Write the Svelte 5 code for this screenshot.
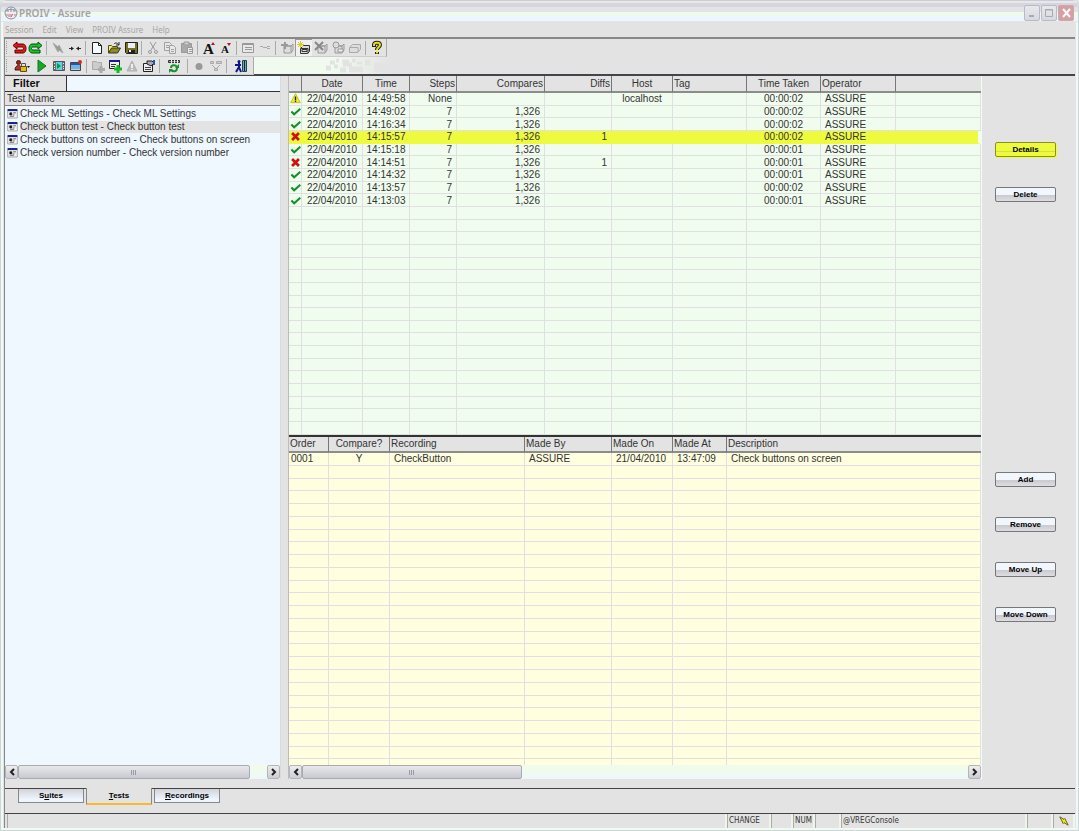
<script>
	const menus = ['Session', 'Edit', 'View', 'PROIV Assure', 'Help']

	// every icon is drawn on a 16 x 16 grid
	const disk = '<path d="M5 6h7l2-2v6l-2 3H5z" fill="#ddd" stroke="#999"/><path d="M5 6h7v6" fill="none" stroke="#999"/>'
	const icons = {
		undo: '<path d="M6 2L2 5.500 6 9V7h5c2 0 2 3 0 3H4v3h8c4 0 4-9 0-9H6z" fill="#e01818" stroke="#600"/>',
		redo: '<path d="M10 2l4 3.500L10 9V7H5c-2 0-2 3 0 3h7v3H4c-4 0-4-9 0-9h6z" fill="#18c828" stroke="#064d0c"/>',
		bolt: '<path d="M3 3l5 4 1-2 4 8-4-3-1 2z" fill="#999" stroke="#a8a8a8"/>',
		connect: '<path d="M2 8.500h4M10 8.500h4" stroke="#333"/><path d="M4 6.500l3 2-3 2zM12 6.500l-3 2 3 2z" fill="#222"/>',
		page: '<path d="M3.500 2.500h6l3 3v8h-9z" fill="#f5faff" stroke="#222"/><path d="M9.500 2.500v3h3" fill="none" stroke="#222"/>',
		open: '<path d="M2.500 13V5.500h3l1 1h5V8" fill="#f4ef80" stroke="#554f10"/><path d="M2.500 13l3-5h9l-3 5z" fill="#918b18" stroke="#333"/><path d="M8 4c2-2 3-1 5 1V2M13 5h-3" fill="none" stroke="#222"/>',
		save: '<path d="M2.500 2.500h12v11h-11l-1-1z" fill="#77751b" stroke="#222"/><path d="M5 3h7v5H5z" fill="#eef"/><path d="M5 10h7v3H5z" fill="#222"/><path d="M6 10h2v2H6z" fill="#eee"/>',
		cut: '<path d="M5 2l5 8M11 2L6 10" fill="none" stroke="#999"/><circle cx="5" cy="12" r="1.500" fill="none" stroke="#999"/><circle cx="11" cy="12" r="1.500" fill="none" stroke="#999"/>',
		copy: '<path d="M2.500 2.500h5l2 2v6h-7z" fill="#e8e8e8" stroke="#a0a0a0"/><path d="M7.500 5.500h4l2 2v6h-6z" fill="#e8e8e8" stroke="#a0a0a0"/><path d="M4 5.500h3M4 7.500h3M9 9.500h3M9 11.500h3" stroke="#a0a0a0"/>',
		paste: '<path d="M2.500 3.500h10v9h-10z" fill="#aaa" stroke="#999"/><path d="M5 2h5v3H5z" fill="#ccc" stroke="#999"/><path d="M8.500 7.500h5v6h-5z" fill="#eee" stroke="#999"/><path d="M10 9.500h3M10 11.500h3" stroke="#999"/>',
		bigger: '<text x="2" y="14" font-family="Liberation Serif" font-size="15" font-weight="700" fill="#111">A</text><path d="M10 5l2-3 2 3z" fill="#b01818"/>',
		smaller: '<text x="3" y="13" font-family="Liberation Serif" font-size="11" font-weight="700" fill="#111">A</text><path d="M9 3l2 3 2-3z" fill="#b01818"/>',
		form: '<path d="M2.500 3.500h11v9h-11z" fill="#e8e8e8" stroke="#999"/><path d="M3 4.500h11M5 7.500h7M5 9.500h7" stroke="#999"/>',
		dots: '<path d="M3 6.500h3M6 7.500h3M10 6.500h3M10 8.500h3M9 7.500h1" stroke="#aaa"/>',
		stackAdd: `${disk}<path d="M6 2v7M2 5h7" stroke="#999" stroke-width="2"/>`,
		stackNew: '<path d="M4.500 8.500l3-3h6v6l-2 2h-7z" fill="#ddd" stroke="#333"/><path d="M6 9.500h5v2H6zM5 8.500h7v5" fill="none" stroke="#333"/><path d="M4.500 1v7M1 4.500h7M2 2l5 5M7 2L2 7" stroke="#d9cf22"/>',
		stackDel: `${disk}<path d="M2 2l8 8M10 2L2 10" stroke="#888" stroke-width="2"/>`,
		stackOpen: `${disk}<circle cx="6" cy="5" r="3" fill="#ddd" stroke="#999"/><path d="M8 9h5v3H8z" fill="#eee" stroke="#999"/>`,
		stack: '<path d="M2.500 7.500l3-3h8v5l-3 3h-8z" fill="#ddd" stroke="#aaa"/><path d="M3 7.500h8v5" fill="none" stroke="#aaa"/>',
		help: '<path d="M5 7V5c0-3 6-3 6 0 0 2-3 2-3 5M8 12v2" fill="none" stroke="#222" stroke-width="4"/><path d="M5 6V5c0-3 6-3 6 0 0 2-3 2-3 5M8 11.500v2" fill="none" stroke="#e6dc18" stroke-width="2"/>',
		lock: '<circle cx="4.500" cy="4.500" r="2" fill="#922" stroke="#511"/><path d="M1 12c0-6 7-6 7 0z" fill="#a33" stroke="#511"/><path d="M7.500 8V5.500h4V8" fill="none" stroke="#555"/><path d="M6.500 8.500h6v5h-6z" fill="#e8b820" stroke="#654b08"/><path d="M13 8h3l-1.500 2z" fill="#111"/>',
		play: '<path d="M4 2l8 6-8 6z" fill="#18a828" stroke="#0b7818"/>',
		film: '<path d="M2.500 3.500h11v9h-11z" fill="#687078" stroke="#555"/><path d="M5 4h6v8H5z" fill="#65cdec"/><path d="M6 5l4 3-4 3z" fill="#159a28"/><path d="M3 5.500h1M3 8.500h1M3 10.500h1M12 5.500h1M12 8.500h1M12 10.500h1" stroke="#eee"/>',
		record: '<path d="M2.500 4.500h10v8h-10z" fill="#6bb6e8" stroke="#444"/><path d="M3 6h9" stroke="#2454b0" stroke-width="2"/><circle cx="12" cy="4" r="2" fill="#d32b20"/><path d="M3 11.500h9" stroke="#ccc"/>',
		folderAdd: '<path d="M2.500 3.500h4l1 1h4v7h-9z" fill="#ccc" stroke="#aaa"/><path d="M11 8v7M8 11.500h7" stroke="#aaa" stroke-width="3"/>',
		testAdd: '<path d="M2.500 2.500h10v8h-10z" fill="#eee" stroke="#222"/><path d="M2 3h11" stroke="#191990" stroke-width="2"/><path d="M4 6.500h5M4 8.500h4" stroke="#333"/><path d="M11 7v8M7 11h8" stroke="#18b828" stroke-width="3"/>',
		warn: '<path d="M8 3l5 10H3z" fill="#bbb" stroke="#b0b0b0"/><path d="M8 6v4M8 11v1" stroke="#eee" stroke-width="2"/>',
		props: '<path d="M2.500 5.500h9v8h-9z" fill="#eee" stroke="#222"/><path d="M4 9.500h6M4 11.500h6" stroke="#444"/><path d="M6 3h5l2 2-3 3-4-2z" fill="#aaa" stroke="#222"/><path d="M12 2h2v5h-2z" fill="#2454b0"/>',
		flow: '<path d="M2.500 2.500h11v2h-11z" fill="#999" stroke="#333"/><path d="M5.500 2v3M8.500 2v3M11.500 2v3" stroke="#eee"/><path d="M5 10c0-3 4-4 6-1M11 10c0 4-4 4-6 2" fill="none" stroke="#18942a" stroke-width="2"/><path d="M13 6v4H9zM3 15v-4h4z" fill="#18942a"/>',
		dot: '<circle cx="8" cy="8.500" r="3.500" fill="#999"/>',
		tree: '<path d="M2.500 3.500h3v2h-3zM8.500 3.500h5v2h-5zM6.500 10.500h3v2h-3z" fill="#ccc" stroke="#aaa"/><path d="M4 7l3 3M12 7l-3 3" stroke="#aaa"/>',
		exit: '<path d="M9.500 2.500h4v11h-4z" fill="#5fb3b8" stroke="#245"/><path d="M11.500 3v10" stroke="#222"/><circle cx="6" cy="3.500" r="1.500" fill="#118"/><path d="M6 4v5l-3 5M6 9l2 5M2 7h6" fill="none" stroke="#118" stroke-width="2"/>',
		// status column
		alert: '<path d="M8 1l7 13H1z" fill="#f5ee20" stroke="#b5a90a"/><path d="M8 5v5M8 11v2" stroke="#222" stroke-width="2"/>',
		ok: '<path d="M2 8l4 4 9-8" fill="none" stroke="#129028" stroke-width="3"/>',
		fail: '<path d="M3 3l10 10M13 3L3 13" stroke="#d01010" stroke-width="4"/>',
		test: '<path d="M1 2.500h14v12H1z" fill="#f2f2f2" stroke="#888"/><path d="M1 3h14" stroke="#1a2090" stroke-width="3"/><path d="M4 7h3v3H4zM9 7h4M9 10h2M4 12h6" fill="#111" stroke="#222"/>'
	}

	const mainBar = [
		'undo', 'redo', '|', 'bolt', 'connect', '|', 'page', 'open', 'save', '|', 'cut', 'copy', 'paste', '|',
		'bigger', 'smaller', '|', 'form', 'dots', '|', 'stackAdd', 'stackNew', 'stackDel', 'stackOpen', 'stack', '|', 'help'
	]
	const testBar = [
		'lock', 'play', 'film', 'record', '|', 'folderAdd', 'testAdd', 'warn', 'props', '|', 'flow', '|', 'dot', 'tree', '|', 'exit'
	]
	const wide = ['lock', 'flow', 'exit']

	const tests = [
		'Check ML Settings - Check ML Settings',
		'Check button test - Check button test',
		'Check buttons on screen - Check buttons on screen',
		'Check version number - Check version number'
	]

	// last column of each grid takes what is left
	const runColumns = [
		{ name: '', width: 13 },
		{ name: 'Date', width: 61, align: 'center' },
		{ name: 'Time', width: 47, align: 'center' },
		{ name: 'Steps', width: 47, align: 'right' },
		{ name: 'Compares', width: 88, align: 'right' },
		{ name: 'Diffs', width: 67, align: 'right' },
		{ name: 'Host', width: 61, align: 'center' },
		{ name: 'Tag', width: 74 },
		{ name: 'Time Taken', width: 74, align: 'center' },
		{ name: 'Operator', width: 75 },
		{ name: '' }
	]
	const runs = [
		['alert', '22/04/2010', '14:49:58', 'None', '', '', 'localhost', '', '00:00:02', 'ASSURE', ''],
		['ok', '22/04/2010', '14:49:02', '7', '1,326', '', '', '', '00:00:02', 'ASSURE', ''],
		['ok', '22/04/2010', '14:16:34', '7', '1,326', '', '', '', '00:00:02', 'ASSURE', ''],
		['fail', '22/04/2010', '14:15:57', '7', '1,326', '1', '', '', '00:00:02', 'ASSURE', ''],
		['ok', '22/04/2010', '14:15:18', '7', '1,326', '', '', '', '00:00:01', 'ASSURE', ''],
		['fail', '22/04/2010', '14:14:51', '7', '1,326', '1', '', '', '00:00:01', 'ASSURE', ''],
		['ok', '22/04/2010', '14:14:32', '7', '1,326', '', '', '', '00:00:01', 'ASSURE', ''],
		['ok', '22/04/2010', '14:13:57', '7', '1,326', '', '', '', '00:00:02', 'ASSURE', ''],
		['ok', '22/04/2010', '14:13:03', '7', '1,326', '', '', '', '00:00:01', 'ASSURE', '']
	]
	const stepColumns = [
		{ name: 'Order', width: 40 },
		{ name: 'Compare?', width: 61, align: 'center' },
		{ name: 'Recording', width: 135 },
		{ name: 'Made By', width: 87 },
		{ name: 'Made On', width: 61 },
		{ name: 'Made At', width: 54 },
		{ name: 'Description' }
	]
	const steps = [['0001', 'Y', 'CheckButton', 'ASSURE', '21/04/2010', '13:47:09', 'Check buttons on screen']]

	const pad = (rows, count, columns) => [
		...rows,
		...Array.from({ length: count - rows.length }, () => columns.map(() => ''))
	]

	let selectedTest = $state(1)
	let selectedRun = $state(3)
	let tab = $state('Tests')
	const tabs = [
		{ name: 'Suites', key: 1 },
		{ name: 'Tests', key: 0 },
		{ name: 'Recordings', key: 0 }
	]
</script>

{#snippet icon(name)}
	<svg class="icon" viewBox="0 0 16 16" aria-hidden="true">{@html icons[name]}</svg>
{/snippet}

{#snippet toolbar(items, label)}
	<div class="toolbar" role="toolbar" aria-label={label}>
		<span class="grip"></span>
		{#each items as item}
			{#if item === '|'}
				<span class="sep"></span>
			{:else}
				<button class="tool" class:wide={wide.includes(item)} class:pressed={item === 'stackNew'} aria-label={item}>
					{@render icon(item)}
				</button>
			{/if}
		{/each}
	</div>
{/snippet}

{#snippet scrollbar(kind)}
	<div class="scrollbar {kind}">
		<button class="arrow" aria-label="Scroll left"><svg viewBox="0 0 8 8"><path d="M6 1L3 4l3 3" /></svg></button>
		<div class="track"><div class="thumb"><i></i><i></i><i></i></div></div>
		<button class="arrow" aria-label="Scroll right"><svg viewBox="0 0 8 8"><path d="M2 1l3 3-3 3" /></svg></button>
	</div>
{/snippet}

{#snippet grid(columns, rows, kind)}
	<table class={kind}>
		<colgroup>
			{#each columns as { width }}
				<col style:width={width ? `${width}px` : 'auto'} />
			{/each}
		</colgroup>
		<thead>
			<tr>
				{#each columns as { name, align }}
					<th class={align}>{name}</th>
				{/each}
			</tr>
		</thead>
		<tbody>
			{#each rows as row, r}
				<tr
					class:selected={kind === 'runs' && r === selectedRun}
					onclick={() => { if (kind === 'runs' && row[0]) selectedRun = r }}
				>
					{#each row as cell, c}
						<td class={columns[c].align}>
							{#if icons[cell]}{@render icon(cell)}{:else}{cell}{/if}
						</td>
					{/each}
				</tr>
			{/each}
		</tbody>
	</table>
{/snippet}

<div class="window">
	<header class="titlebar">
		<svg class="logo" viewBox="0 0 14 14" aria-hidden="true">
			<circle cx="7" cy="7" r="6" fill="#ececf2" stroke="#8e8e9c" />
			<path d="M2 5c3-2 7-2 10 0M4 3v3M7 2v4M10 3v3" fill="none" stroke="#8e8e9c" />
			<path d="M5 8v3M7 8v3l2-3" fill="none" stroke="#d86a6a" />
			<path d="M3 8v2M11 8v2" stroke="#8e8e9c" />
		</svg>
		<h1>PROIV - Assure</h1>
		<button class="caption" aria-label="Minimise"><svg viewBox="0 0 14 14"><path d="M4 10h5" stroke-width="2" /></svg></button>
		<button class="caption" aria-label="Maximise"><svg viewBox="0 0 14 14"><path d="M3.500 3.500h7v7h-7z" /><path d="M3 4h8" /></svg></button>
		<button class="caption close" aria-label="Close"><svg viewBox="0 0 14 14"><path d="M4 3l7 8M11 3l-7 8" stroke-width="2" /></svg></button>
	</header>

	<nav class="menu">
		{#each menus as menu}
			<button>{menu}</button>
		{/each}
	</nav>

	<div class="client">
		<div class="bars">
			{@render toolbar(mainBar, 'Main')}
			<div class="bar_row">
				{@render toolbar(testBar, 'Tests')}
				<svg class="specks" viewBox="0 0 137 16" aria-hidden="true">
					<path d="M76 3h5v4h-5zM82 1h3v4h-3zM88 2h7v3h3v4h-9zM98 1h4v4h-4zM72 8h5v5h-5zM80 7h4v4h-4zM86 10h6v5h-6zM95 9h14v6H95zM103 4h5v3h-5zM111 2h5v6h-5zM120 5h17v10h-17z" />
				</svg>
			</div>
		</div>

		<main>
			<section class="side">
				<div class="filter">
					<label for="filter">Filter</label>
					<input id="filter" type="text" />
				</div>
				<div class="list_head">Test Name</div>
				<ul>
					{#each tests as test, i}
						<li>
							<button class:current={i === selectedTest} onclick={() => (selectedTest = i)}>
								{@render icon('test')}<span>{test}</span>
							</button>
						</li>
					{/each}
				</ul>
				{@render scrollbar('left')}
			</section>

			<section class="grids">
				{@render grid(runColumns, pad(runs, 27, runColumns), 'runs')}
				{@render grid(stepColumns, pad(steps, 25, stepColumns), 'steps')}
				{@render scrollbar('right')}
			</section>

			<aside>
				<div class="actions">
					<button class="action hot">Details</button>
					<button class="action">Delete</button>
				</div>
				<div class="actions">
					<button class="action">Add</button>
					<button class="action">Remove</button>
					<button class="action">Move Up</button>
					<button class="action">Move Down</button>
				</div>
			</aside>
		</main>

		<div class="tabs">
			{#each tabs as { name, key }}
				<button class:active={name === tab} onclick={() => (tab = name)}>
					{name.slice(0, key)}<u>{name[key]}</u>{name.slice(key + 1)}
				</button>
			{/each}
		</div>

		<footer>
			<span class="fill"></span>
			<span class="change">CHANGE</span>
			<span class="small"></span>
			<span class="small">NUM</span>
			<span class="medium"></span>
			<span class="host">@VREGConsole</span>
			<span class="medium"></span>
			<span class="small">
				<svg class="spark" viewBox="0 0 12 12" aria-hidden="true">
					<path d="M1 1l5 3 1-1 4 8-5-3-1 1z" fill="#f0e818" stroke="#4f4a10" />
				</svg>
			</span>
		</footer>
	</div>
</div>

<style>
	:global(body) {
		margin: 0;
		background: #e3e3e3;
	}

	.window {
		box-sizing: border-box;
		min-height: 100vh;
		display: flex;
		flex-direction: column;
		padding: 0 3px 2px 3px;
		background: #e3e3e3;
		border: 1px solid #ccd6d8;
		border-top: 0;
		border-radius: 6px 6px 0 0;
		box-shadow: inset 2px 0 #f0faf4, inset -2px 0 #f0faf4, inset 0 -2px #f2f9ee;
		font-family: "Liberation Sans", Arial, sans-serif;
		font-size: 10px;
		line-height: 12px;
		color: #333;
	}

	button {
		padding: 0;
		border: 0;
		background: none;
		font: inherit;
		color: inherit;
	}

	.titlebar {
		height: 22px;
		margin: 0 -3px;
		padding: 3px 4px 0 3px;
		box-sizing: border-box;
		display: flex;
		align-items: center;
		gap: 1px;
		border-radius: 6px 6px 0 0;
		background: linear-gradient(#ccccd2 0 1px, #e8e8ec 1px 3px, #d5d5df 3px 7px, #e3e3e5 7px 12px, #eefaec 12px 16px, #edf5fe 16px 21px, #dfe8e4 21px);
	}

	.logo {
		width: 14px;
		height: 14px;
	}

	h1 {
		flex: 1;
		margin: 0;
		font: 600 10px/14px "Noto Sans", "DejaVu Sans", sans-serif;
		color: #a5a1a1;
	}

	.caption {
		width: 16px;
		height: 16px;
		box-sizing: border-box;
		border: 1px solid #b9b9c9;
		border-radius: 2px;
		background: linear-gradient(#e8e8ec, #d8d8e0);
	}

	.caption svg {
		display: block;
		width: 14px;
		height: 14px;
		fill: none;
		stroke: #aaaaae;
	}

	.caption.close {
		border-color: #d3a5a9;
		background: #d5a0a4;
	}

	.caption.close svg {
		stroke: #fafafa;
	}

	.menu {
		display: flex;
		gap: 9px;
		height: 15px;
		padding-left: 1px;
		font: 8px/15px "Noto Sans", "DejaVu Sans", sans-serif;
		color: #a8a6a2;
	}

	.client {
		flex: 1;
		display: flex;
		flex-direction: column;
		border-left: 1px solid #888;
		border-top: 2px solid #888;
	}

	.bars {
		height: 37px;
		border-bottom: 2px solid #44444a;
		box-sizing: border-box;
	}

	.bar_row {
		display: flex;
	}

	.toolbar {
		box-sizing: border-box;
		display: flex;
		align-items: center;
		width: max-content;
		height: 18px;
		padding-right: 1px;
		border-right: 1px solid #aaa;
		border-bottom: 1px solid #ccc;
	}

	.grip {
		width: 2px;
		height: 13px;
		margin: 0 1px;
		border-left: 1px dotted #999;
	}

	.sep {
		width: 1px;
		height: 14px;
		margin: 0 2px;
		background: #aaa;
	}

	.tool {
		width: 17px;
		height: 17px;
		display: flex;
		align-items: center;
		justify-content: center;
	}

	.tool.wide {
		width: 23px;
	}

	.tool .icon {
		flex: none;
		width: 16px;
		height: 16px;
	}

	.tool.pressed {
		background: #f0f0ee;
		box-shadow: inset 1px 1px #999;
	}

	.specks {
		width: 137px;
		height: 17px;
		background: linear-gradient(90deg, #f0faee 60%, #e3e3e3);
		fill: #e3e3e3;
	}

	main {
		flex: 1;
		display: grid;
		grid-template-columns: 276px 1fr 93px;
		background: #e3e3e3;
	}

	.side {
		display: flex;
		flex-direction: column;
		background: #eff7ff;
		border-right: 1px solid #d5dcd8;
	}

	.filter {
		display: flex;
		height: 15px;
		border-bottom: 1px solid #333;
	}

	.filter label {
		width: 53px;
		padding-left: 8px;
		background: #e3e3e3;
		font-weight: bold;
		font-size: 11px;
		line-height: 14px;
		color: #111;
	}

	.filter input {
		flex: 1;
		min-width: 0;
		padding: 0 2px;
		border: 0;
		border-left: 1px solid #333;
		background: #eff7ff;
		font: inherit;
	}

	.list_head {
		padding: 1px 2px 0;
		background: #e3e3e3;
		border-bottom: 1px solid #888;
	}

	ul {
		flex: 1;
		margin: 0;
		padding: 1px 0 0;
		list-style: none;
	}

	li button {
		display: flex;
		align-items: center;
		gap: 2px;
		width: 100%;
		height: 13px;
		padding-left: 2px;
		text-align: left;
	}

	li span {
		flex: 1;
	}

	li .current span {
		background: #e3e3e3;
	}

	li .icon {
		width: 11px;
		height: 11px;
	}

	.grids {
		display: grid;
		grid-template-rows: 359fr 330fr 14px;
		margin-left: 7px;
		border-left: 1px solid #bbb;
		border-right: 1px solid #f5fbf5;
	}

	table {
		width: 100%;
		height: 100%;
		table-layout: fixed;
		border-collapse: separate;
		border-spacing: 0;
	}

	.runs {
		background: #f0fcee;
	}

	.steps {
		background: #ffffdf;
		border-top: 2px solid #333;
	}

	th {
		height: 14px;
		padding: 0 1px;
		background: #e3e3e3;
		border-right: 1px solid #777;
		border-bottom: 2px solid #8c8c8c;
		font-weight: normal;
		text-align: left;
	}

	.runs th {
		height: 15px;
	}

	td {
		height: 11px;
		padding: 0 4px;
		border-right: 1px solid #e0e0e2;
		border-bottom: 1px solid #e0e0e2;
		line-height: 11px;
		white-space: nowrap;
	}

	th:last-child {
		border-right: 0;
	}

	.steps td:first-child {
		padding-left: 2px;
	}

	.runs td:first-child {
		padding: 0 1px;
	}

	td .icon {
		display: block;
		width: 11px;
		height: 11px;
	}

	.steps tr:last-child td {
		height: 5px;
		border-bottom: 0;
	}

	.center {
		padding: 0;
		text-align: center;
	}

	.right {
		text-align: right;
	}

	.selected td {
		background: #eefa3d;
		border-color: #eefa3d;
	}

	.selected td:last-child {
		border-right: 3px solid #f0fcee;
	}

	.scrollbar {
		display: flex;
		height: 14px;
		background: linear-gradient(#f0fbee 50%, #eef6ff);
	}

	.arrow {
		width: 13px;
		box-sizing: border-box;
		border: 1px solid #b4b4bc;
		border-radius: 2px;
		background: linear-gradient(#eee, #ccccd4);
	}

	.arrow svg {
		display: block;
		margin: auto;
		width: 8px;
		height: 8px;
		fill: none;
		stroke: #222;
		stroke-width: 2;
	}

	.track {
		flex: 1;
		display: flex;
	}

	.thumb {
		box-sizing: border-box;
		width: 93%;
		display: flex;
		align-items: center;
		justify-content: center;
		gap: 1px;
		border: 1px solid #aaaab2;
		border-radius: 2px;
		background: linear-gradient(#e8e8ec, #d8d8de 50%, #c9c9d1);
	}

	.right .thumb {
		width: 33%;
	}

	.thumb i {
		width: 1px;
		height: 5px;
		background: #9a9aa4;
	}

	aside {
		display: flex;
		flex-direction: column;
		gap: 270px;
		padding: 66px 19px 0 13px;
	}

	.actions {
		display: flex;
		flex-direction: column;
		gap: 30px;
	}

	.action {
		height: 15px;
		box-sizing: border-box;
		border: 1px solid #77777b;
		border-radius: 2px;
		background: linear-gradient(#f2f7fe 50%, #c9c9cf 55%, #dedee2);
		font-weight: bold;
		font-size: 8px;
		line-height: 12px;
		color: #000;
	}

	.action.hot {
		border-color: #8b9023;
		background: linear-gradient(#eefa3d 60%, #cdd632 62%, #eefa3d 72%);
		box-shadow: 1px 1px #eefa3d;
	}

	.tabs {
		display: flex;
		align-items: flex-start;
		gap: 2px;
		height: 24px;
		margin-top: 9px;
		padding-left: 13px;
		border-top: 1px solid #444;
	}

	.tabs button {
		width: 66px;
		height: 14px;
		box-sizing: border-box;
		border: 1px solid #888;
		border-top: 0;
		background: linear-gradient(#d3d3d9, #eef5fe 80%);
		font-weight: bold;
		font-size: 8px;
		line-height: 12px;
		color: #000;
	}

	.tabs .active {
		height: 17px;
		margin-top: -1px;
		border-bottom: 2px solid #f8b830;
		background: #e3e3e3;
	}

	footer {
		display: flex;
		height: 14px;
		border-top: 1px solid #444;
		font: 8px/14px "DejaVu Sans Condensed", "DejaVu Sans", sans-serif;
	}

	footer span {
		box-sizing: border-box;
		padding-left: 1px;
		border-left: 1px solid #aaa;
		border-right: 2px solid #eef5ec;
	}

	.fill {
		flex: 1;
		margin-left: 2px;
	}

	.change {
		width: 44px;
	}

	.small {
		width: 22px;
	}

	.medium {
		width: 26px;
	}

	.host {
		width: 186px;
	}

	.spark {
		display: block;
		width: 10px;
		height: 10px;
		margin: 2px auto;
	}
</style>
